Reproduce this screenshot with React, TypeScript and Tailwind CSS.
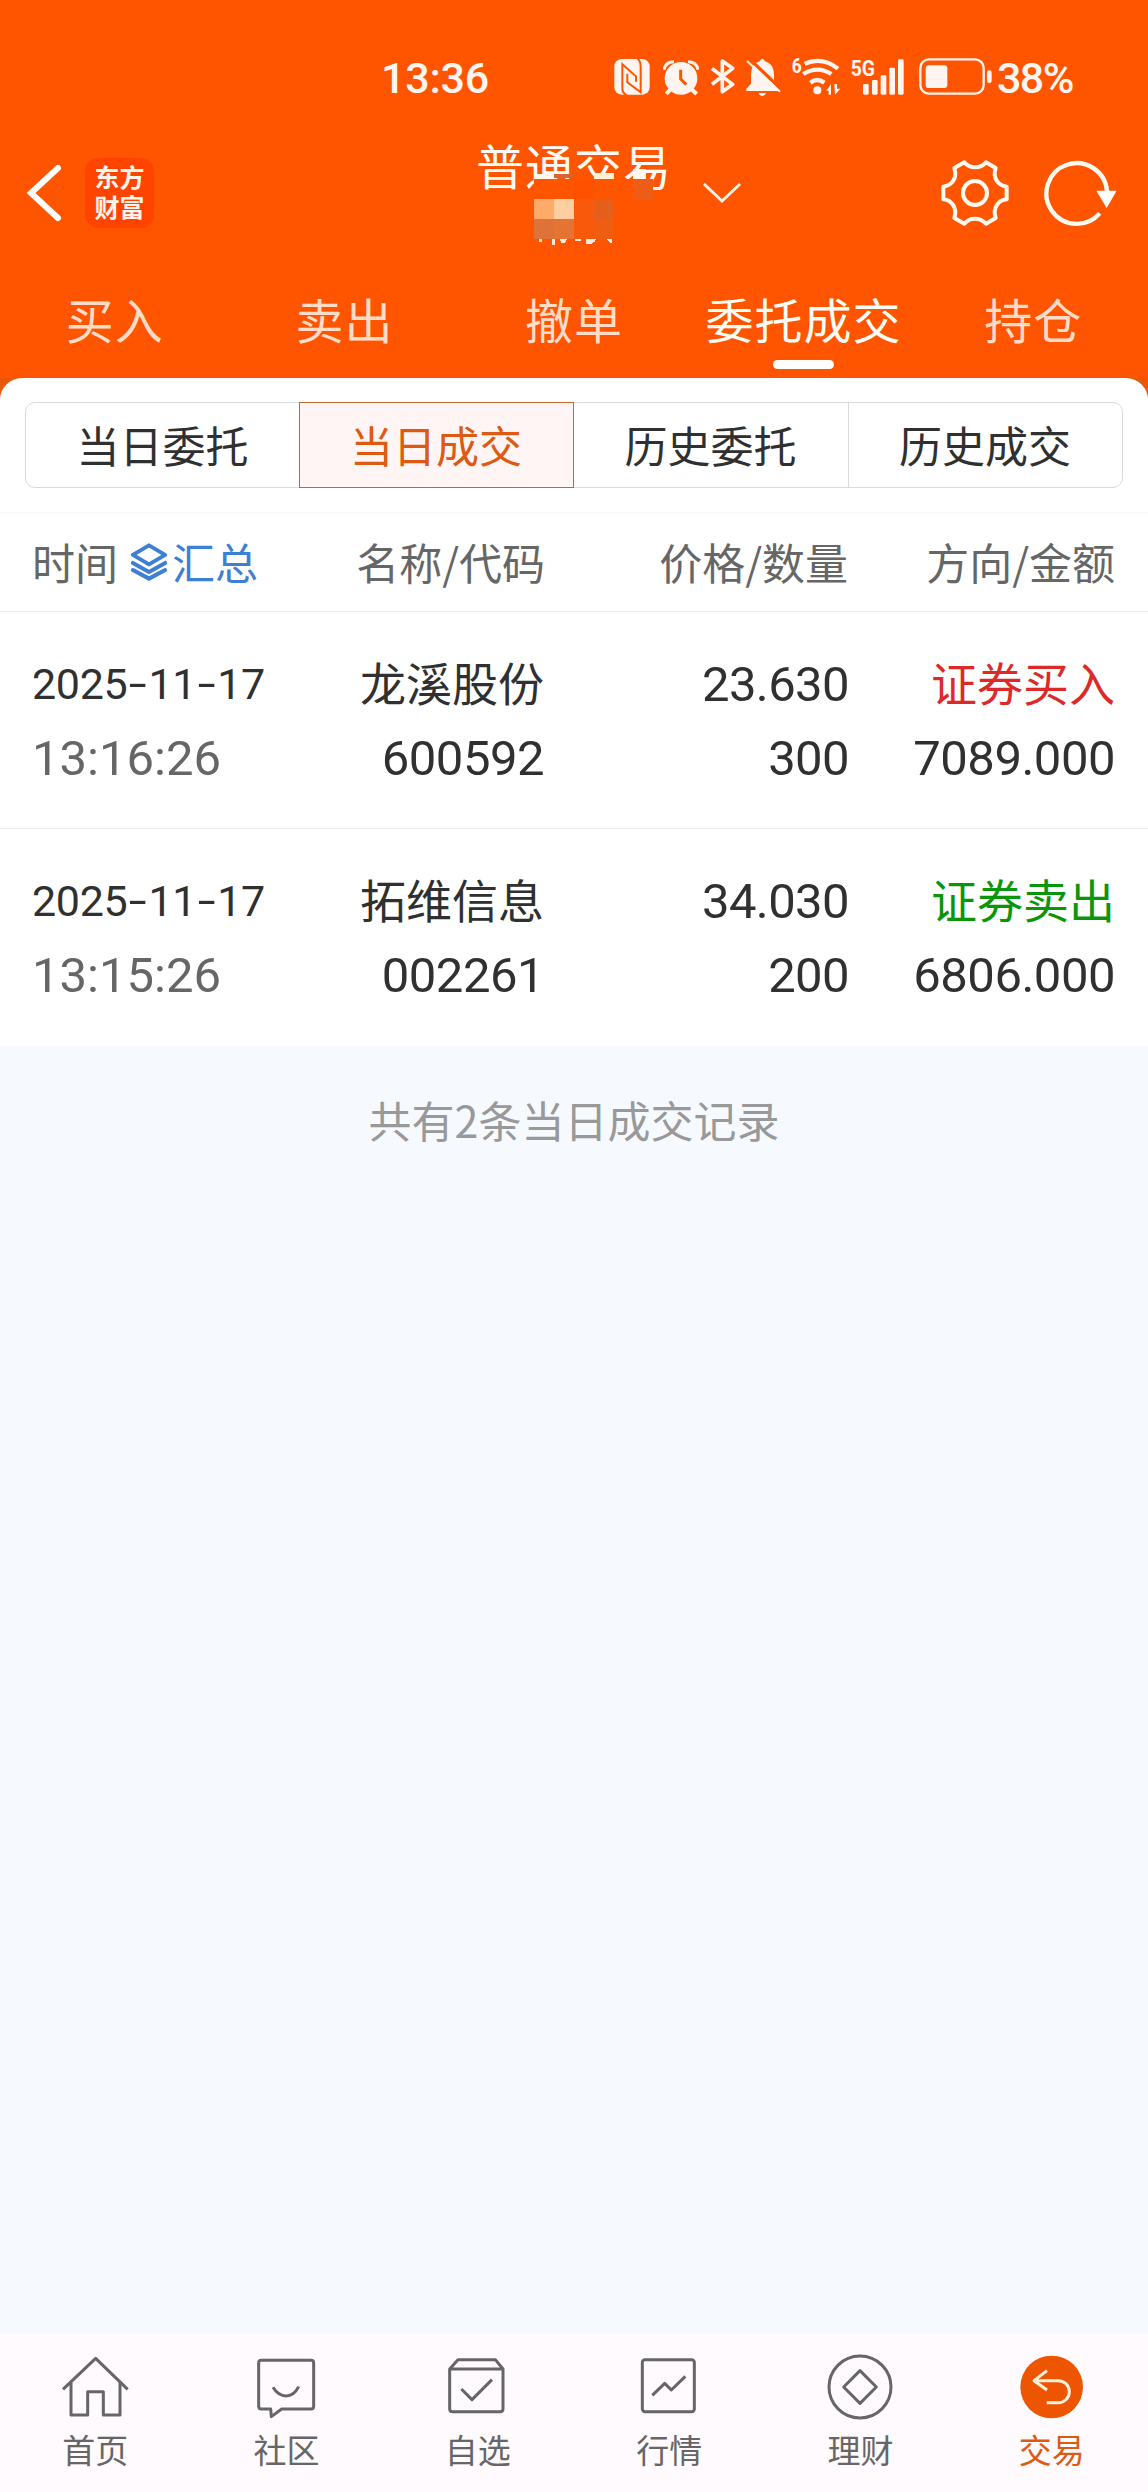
import type { ReactNode } from 'react';
import clsx from 'clsx';

const tabs = ['买入', '卖出', '撤单', '委托成交', '持仓'];
const segments = ['当日委托', '当日成交', '历史委托', '历史成交'];

const trades = [
  { date: '2025-11-17', time: '13:16:26', name: '龙溪股份', code: '600592', price: '23.630', count: '300', side: '证券买入', amount: '7089.000', buy: true },
  { date: '2025-11-17', time: '13:15:26', name: '拓维信息', code: '002261', price: '34.030', count: '200', side: '证券卖出', amount: '6806.000', buy: false },
];

function StatusBar() {
  return (
    <div className="flex h-[120px] items-start pt-[58px] pl-[381px] text-[#fff5f0]">
      <span className="w-[233px] font-[Roboto] text-[43px] leading-[41px] font-medium tracking-[-0.2px]">13:36</span>
      {/* nfc */}
      <svg className="mr-[13px] h-[38px] w-[36px]" viewBox="42 57 108 114">
        <rect x="43" y="60" width="106" height="107" rx="22" fill="currentColor" />
        <path d="M80 169 Q67 162 67 148 V76 L108 112 V128 M82 104 V130 L122 160 V84 Q122 66 112 58" fill="none" stroke="#ff5500" strokeWidth="6" />
      </svg>
      {/* alarm */}
      <svg className="mr-[12px] h-[38px] w-[36px]" viewBox="189 57 108 114">
        <path d="M192 92 Q196 68 222 68 M294 92 Q290 68 264 68" fill="none" stroke="currentColor" strokeWidth="9" />
        <path d="M212 150 L199 165 M274 150 L290 165" stroke="currentColor" strokeWidth="12" />
        <circle cx="243" cy="118" r="49" fill="currentColor" />
        <path d="M242 92 V120 L259 137" fill="none" stroke="#ff5500" strokeWidth="9" />
      </svg>
      {/* bluetooth */}
      <svg className="mr-[11px] h-[38px] w-[24px]" viewBox="335 57 72 114">
        <path d="M338 88 L400 136 L369 158 V66 L400 88 L338 136" fill="none" stroke="currentColor" strokeWidth="11" strokeLinejoin="round" />
      </svg>
      {/* muted bell */}
      <svg className="mr-[11px] h-[38px] w-[35px]" viewBox="441 57 105 114">
        <path d="M442 156 V149 L456 134 V108 Q456 74 482 67 Q490 52 498 67 Q525 74 525 108 V134 L538 149 V156 Z M479 162 H502 Q498 171 490 171 Q482 171 479 162Z" fill="currentColor" />
        <path d="M452 60 L548 152" stroke="#ff5500" strokeWidth="10" />
        <path d="M444 66 L543 158" stroke="currentColor" strokeWidth="6" />
      </svg>
      {/* wifi */}
      <svg className="mr-[10px] h-[38px] w-[49px] overflow-visible" viewBox="579 54 147 114">
        <text x="578" y="100" fill="currentColor" className="font-[Roboto] text-[62px] font-bold" textLength="30" lengthAdjust="spacingAndGlyphs">6</text>
        <path d="M617 71 Q670 49 717 86 M613 102 Q655 76 697 102 M634 128 Q655 112 676 128" fill="none" stroke="currentColor" strokeWidth="13" />
        <circle cx="655" cy="151" r="12" fill="currentColor" />
        <path d="M682 152 L696 132 V164 H689 V152Z M708 164 L724 146 H714 V132 H706Z" fill="currentColor" />
      </svg>
      {/* signal */}
      <svg className="mr-[15px] h-[38px] w-[53px] overflow-visible" viewBox="756 54 159 114">
        <text x="755" y="107" fill="currentColor" className="font-[Roboto] text-[66px] font-bold" textLength="73" lengthAdjust="spacingAndGlyphs">5G</text>
        <g fill="currentColor">
          <rect x="792" y="132" width="17" height="32" rx="4" />
          <rect x="819" y="120" width="17" height="44" rx="4" />
          <rect x="845" y="106" width="17" height="58" rx="4" />
          <rect x="871" y="83" width="17" height="81" rx="4" />
          <rect x="897" y="58" width="17" height="106" rx="4" />
        </g>
      </svg>
      {/* battery */}
      <svg className="mr-[5px] h-[38px] w-[73px]" viewBox="956 54 219 114">
        <rect x="960" y="58" width="190" height="103" rx="26" fill="none" stroke="currentColor" strokeWidth="7" />
        <rect x="976" y="76" width="65" height="68" rx="10" fill="currentColor" />
        <rect x="1160" y="91" width="14" height="38" rx="7" fill="currentColor" />
      </svg>
      <span className="font-[Roboto] text-[43px] leading-[41px] font-medium tracking-[-1.6px]">38%</span>
    </div>
  );
}

function TitleBar() {
  return (
    <div className="flex h-[145px] items-center">
      <svg className="ml-[26px] h-[60px] w-[38px]" viewBox="0 0 38 60">
        <path d="M32 5 L5 30 L32 55" fill="none" stroke="#fff" strokeWidth="6" strokeLinecap="round" />
      </svg>
      <div className="ml-[21px] flex h-[70px] w-[69px] items-center justify-center rounded-[13px] bg-[#ff4400] pb-[3px] text-center text-[25px] leading-[30px] font-bold text-[#fff3ea]">
        <p>
          东方
          <br />
          财富
        </p>
      </div>
      <div className="relative ml-[322px] h-[110px] w-[192px]">
        <span className="block text-[48px] leading-[52px] tracking-[1px] whitespace-nowrap text-[#fffaf5]">普通交易</span>
        {/* mosaic over the account name */}
        <svg className="absolute top-0 left-0 h-[110px] w-[192px]" viewBox="476 138 192 110" shapeRendering="crispEdges">
          <path d="M534 179h99v60h-99z M633 179h12l8 20h-20z" fill="#ff5500" />
          <rect x="534" y="174" width="20" height="5" fill="#fff7ea" />
          <rect x="554" y="174" width="20" height="4" fill="#d9642f" />
          <rect x="594" y="173" width="20" height="6" fill="#ffefd4" />
          <rect x="633" y="169" width="13" height="10" fill="#fff7f0" />
          <rect x="633" y="179" width="20" height="20" fill="#ee5c18" />
          <rect x="534" y="199" width="20" height="20" fill="#ffaa6b" />
          <rect x="554" y="199" width="20" height="20" fill="#ffcf9f" />
          <rect x="574" y="179" width="20" height="20" fill="#ff5100" />
          <rect x="574" y="199" width="20" height="40" fill="#f9590a" />
          <rect x="594" y="199" width="20" height="20" fill="#e55f1b" />
          <rect x="534" y="219" width="20" height="20" fill="#de7238" />
          <rect x="554" y="219" width="20" height="20" fill="#e57334" />
          <rect x="594" y="219" width="20" height="20" fill="#ee5d12" />
          <path d="M539 239h3v3h-3z M552 239h3v6h-3z M560 239h7l-2 4h-4z M575 239h6v2h-6z M586 239h8l-2 5h-6z M592 239h4l-2 4z M607 239h5v4h-2z" fill="#ffe9d9" />
        </svg>
      </div>
      <svg className="ml-[34px] h-[24px] w-[40px]" viewBox="0 0 40 24">
        <path d="M2 3 L20 20 L38 3" fill="none" stroke="#fff3e6" strokeWidth="3" />
      </svg>
      <svg className="ml-[199px] h-[68px] w-[68px]" viewBox="123 55 204 204">
        <g fill="none" stroke="#fffaf0" strokeWidth="12" strokeLinejoin="round">
          <path d="M193 65 Q205 80 225 80 Q245 80 258 65 L287 82 Q280 105 290 120 Q300 135 320 138 V176 Q300 178 290 194 Q280 210 287 232 L258 249 Q245 234 225 234 Q205 234 193 249 L163 232 Q170 210 160 194 Q150 178 130 176 V138 Q150 135 160 120 Q170 105 163 82 Z" />
          <circle cx="225" cy="157" r="36" />
        </g>
      </svg>
      <svg className="ml-[34px] h-[68px] w-[74px]" viewBox="430 55 222 204">
        <path d="M622 152 A91 91 0 1 0 600 218" fill="none" stroke="#fffaf0" strokeWidth="13" />
        <path d="M590 150 H651 L621 202Z" fill="#fff" />
      </svg>
    </div>
  );
}

function TabBar() {
  return (
    <div className="grid h-[113px] grid-cols-5">
      {tabs.map((tab) => {
        const active = tab === '委托成交';
        return (
          <div key={tab} className="flex flex-col items-center pt-[25px]">
            <span className={clsx('text-[48px] leading-[56px] tracking-[1px] whitespace-nowrap', active ? 'text-[#fffdf8]' : 'text-[#ffdcc8]')}>{tab}</span>
            {active && <span className="mt-[14px] h-[9px] w-[61px] rounded-full bg-white" />}
          </div>
        );
      })}
    </div>
  );
}

function Segments() {
  return (
    <div className="mx-[25px] grid h-[86px] grid-cols-4 rounded-[10px] border border-[#d8dadc]">
      {segments.map((item, i) => (
        <div
          key={item}
          className={clsx(
            'flex items-center justify-center pr-px pb-[3px] text-[43px] leading-[50px]',
            i === 1 ? '-my-px -ml-px border border-[#c4672f] bg-[#fff5f5] text-[#dd5a12]' : 'text-[#303030]',
            i === 3 && 'border-l border-[#d8dadc]'
          )}
        >
          {item}
        </div>
      ))}
    </div>
  );
}

function DateText({ value }: { value: string }) {
  const parts = value.split('-');
  return (
    <span className="font-[Roboto] text-[43px] leading-[50px] tracking-[-0.3px] whitespace-nowrap">
      {parts.map((part, i) => (
        <span key={i}>
          {i > 0 && <span className="inline-block w-[21px] -translate-y-px scale-x-150 text-center">-</span>}
          {part}
        </span>
      ))}
    </span>
  );
}

function Num({ children, className }: { children: ReactNode; className?: string }) {
  return <span className={clsx('font-[Roboto] text-[49px] leading-[52px]', className)}>{children}</span>;
}

function TradeTable() {
  return (
    <>
      <div className="mt-[24px] grid h-[100px] grid-cols-[282px_231px_303px_267px] items-center border-t border-b border-t-[#f8f8f8] border-b-[#ebebeb] pb-[3px] pl-[32px] text-[43px] leading-[50px] text-[#666]">
        <div className="flex items-center whitespace-nowrap">
          <span>时间</span>
          <svg className="mt-[2px] ml-[12px] h-[38px] w-[38px]" viewBox="0 0 39 40" fill="none" stroke="#3e7fd6" strokeWidth="4.2" strokeLinejoin="round" strokeLinecap="round">
            <path d="M19.5 2.5 L36.5 12.5 L19.5 22.5 L2.5 12.5 Z" />
            <path d="M2.5 21 L19.5 30.5 L36.5 21 M2.5 28.5 L19.5 37.5 L36.5 28.5" />
          </svg>
          <span className="ml-[4px] text-[#3e7fd6]">汇总</span>
        </div>
        <span className="text-right">名称/代码</span>
        <span className="text-right">价格/数量</span>
        <span className="text-right">方向/金额</span>
      </div>
      {trades.map((t) => (
        <div
          key={t.time}
          className="grid h-[217px] grid-cols-[282px_230px_305px_266px] grid-rows-[50px_50px] content-start gap-y-[24px] border-b border-[#ebebeb] pt-[47px] pl-[32px] text-[46px] text-[#303030] last:border-0"
        >
          <DateText value={t.date} />
          <span className="text-right leading-[44px]">{t.name}</span>
          <Num className="text-right tracking-[-0.6px]">{t.price}</Num>
          <span className={clsx('text-right leading-[44px]', t.buy ? 'text-[#dc2a2a]' : 'text-[#0a960a]')}>{t.side}</span>
          <Num className="text-[#666]">{t.time}</Num>
          <Num className="text-right tracking-[-0.5px]">{t.code}</Num>
          <Num className="text-right tracking-[-0.6px]">{t.count}</Num>
          <Num className="text-right tracking-[-0.5px]">{t.amount}</Num>
        </div>
      ))}
    </>
  );
}

const navItems = [
  {
    label: '首页',
    viewBox: '179 96 216 216',
    icon: (
      <>
        <path d="M188 208 L286 115 L382 208" />
        <path d="M212 187 V285 H262 V215 H309 V285 H359 V187" />
      </>
    ),
  },
  {
    label: '社区',
    viewBox: '753 96 216 216',
    icon: (
      <>
        <path d="M784 121 H933 q8 0 8 8 V259 q0 8 -8 8 H845 L814 290 L812 267 H784 q-8 0 -8 -8 V129 q0 -8 8 -8Z" />
        <path d="M819 202 Q835 228 858 228 Q882 228 896 200" />
      </>
    ),
  },
  {
    label: '自选',
    viewBox: '127 96 216 216',
    icon: (
      <>
        <path d="M150 147 L175 119 H287 L310 147 V267 q0 8 -8 8 H158 q-8 0 -8 -8 Z H310" />
        <path d="M185 207 L217 239 L277 179" />
      </>
    ),
  },
  {
    label: '行情',
    viewBox: '701 96 216 216',
    icon: (
      <>
        <rect x="726" y="119" width="156" height="156" rx="8" />
        <path d="M756 226 L793 190 L813 210 L855 169" />
      </>
    ),
  },
  {
    label: '理财',
    viewBox: '231 96 216 216',
    icon: (
      <>
        <circle cx="336" cy="201" r="93" />
        <path d="M336 152 L385 201 L336 250 L287 201 Z" />
      </>
    ),
  },
  {
    label: '交易',
    viewBox: '805 96 216 216',
    active: true,
    icon: (
      <>
        <circle cx="912" cy="201" r="94" fill="#ee5500" stroke="none" />
        <path d="M898 152 L859 182 L898 210 M860 182 H932 a33 33 0 0 1 0 66 H897" stroke="#fff0dc" />
      </>
    ),
  },
];

function BottomNav() {
  return (
    <nav className="grid h-[159px] grid-cols-6 bg-[#fefafe]">
      {navItems.map((item) => (
        <div key={item.label} className="flex flex-col items-center pt-[19px]">
          <svg className="size-[72px]" viewBox={item.viewBox} fill="none" stroke="#666" strokeWidth="9" strokeLinejoin="round">
            {item.icon}
          </svg>
          <span className={clsx('mt-[5px] pr-px text-[33px] leading-[40px]', item.active ? 'text-[#dd5a12]' : 'text-[#666]')}>{item.label}</span>
        </div>
      ))}
    </nav>
  );
}

export default function App() {
  return (
    <div className="flex h-[2492px] w-[1148px] flex-col overflow-hidden bg-[#f6faff] font-['Noto_Sans_CJK_SC',sans-serif]">
      <header className="bg-[#ff5500]">
        <StatusBar />
        <TitleBar />
        <TabBar />
      </header>
      <main className="flex-1">
        <div className="bg-linear-to-b from-[#ea5606] from-16px to-white to-16px">
          <div className="rounded-t-[22px] bg-white pt-[24px]">
            <Segments />
            <TradeTable />
          </div>
        </div>
        <p className="mt-[48px] text-center text-[43px] leading-[50px] text-[#999]">共有2条当日成交记录</p>
      </main>
      <BottomNav />
    </div>
  );
}
